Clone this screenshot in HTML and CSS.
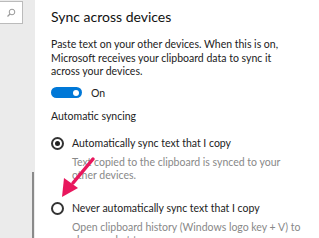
FILE: index.html
```html
<html>
<head>
  <link rel="stylesheet" href="styles.css">
</head>
<body>
  <div class="window">
    <div class="sidebar">
      <div class="search">
        <svg width="10" height="10" viewBox="0 0 10 10"><circle cx="6" cy="4" r="2.8" fill="none" stroke="#999" stroke-width="1"/><line x1="4" y1="6" x2="1.5" y2="8.5" stroke="#999" stroke-width="1.2"/></svg>
      </div>
      <div class="scroll"></div>
    </div>
    <div class="content">
      <div class="title">Sync across devices</div>
      <p class="text">Paste text on your other devices. When this is on,<br>Microsoft receives your clipboard data to sync it<br>across your devices.</p>
      <div class="toggle-row">
        <div class="toggle"><div class="knob"></div></div>
        <span>On</span>
      </div>
      <div class="label">Automatic syncing</div>
      <div class="radio-row">
        <div class="radio checked"></div>
        <span>Automatically sync text that I copy</span>
      </div>
      <p class="desc">Text copied to the clipboard is synced to your<br>other devices.</p>
      <div class="radio-row">
        <div class="radio"></div>
        <span>Never automatically sync text that I copy</span>
      </div>
      <p class="desc">Open clipboard history (Windows logo key + V) to<br>choose what to sync.</p>
    </div>
    <svg class="arrow" width="50" height="50" viewBox="0 0 50 50">
      <line x1="40" y1="4" x2="20" y2="28" stroke="#e8175d" stroke-width="3.5" stroke-linecap="round"/>
      <polygon points="9,42 11,23 25,33" fill="#e8175d"/>
    </svg>
  </div>
</body>
</html>
```
FILE: styles.css
```css
body {
  margin: 0;
  background: white;
  font-family: Lato, sans-serif;
  color: #222;
  overflow: hidden;
}

.window {
  display: flex;
  height: 238px;
  position: relative;
  overflow: hidden;
}

.sidebar {
  width: 35px;
  flex-shrink: 0;
  background-color: #ebebeb;
  position: relative;
}

.search {
  width: 22px;
  height: 21px;
  margin-top: 1px;
  background: white;
  border: 1px solid #bbb;
  border-left: none;
  display: flex;
  align-items: center;
  justify-content: center;
}

.scroll {
  position: absolute;
  left: 32px;
  top: 172px;
  width: 2px;
  height: 70px;
  background: #8a8a8a;
}

.content {
  padding-left: 16px;
  padding-top: 6px;
  white-space: nowrap;
  font-size: 10.5px;
}

.title {
  font-size: 14px;
  line-height: 22px;
  color: #111;
  margin-bottom: 10px;
}

.text, .desc {
  margin: 0;
  line-height: 13.5px;
}

.desc {
  color: #888;
  padding-left: 21px;
  margin-top: 6px;
}

.toggle-row {
  display: flex;
  align-items: center;
  gap: 9px;
  margin-top: 8px;
}

.toggle {
  width: 31px;
  height: 11px;
  border-radius: 6px;
  background: #0078d7;
  position: relative;
}

.knob {
  position: absolute;
  right: 3px;
  top: 2.5px;
  width: 6px;
  height: 6px;
  border-radius: 50%;
  background: white;
}

.label {
  margin-top: 11px;
}

.radio-row {
  display: flex;
  align-items: center;
  gap: 8px;
  margin-top: 15px;
}

.radio-row + .desc + .radio-row {
  margin-top: 19px;
}

.radio {
  width: 9px;
  height: 9px;
  border: 2px solid #333;
  border-radius: 50%;
  position: relative;
}

.radio.checked::after {
  content: "";
  position: absolute;
  left: 2px;
  top: 2px;
  width: 5px;
  height: 5px;
  border-radius: 50%;
  background: #222;
}

.arrow {
  position: absolute;
  left: 53px;
  top: 155px;
}
```
